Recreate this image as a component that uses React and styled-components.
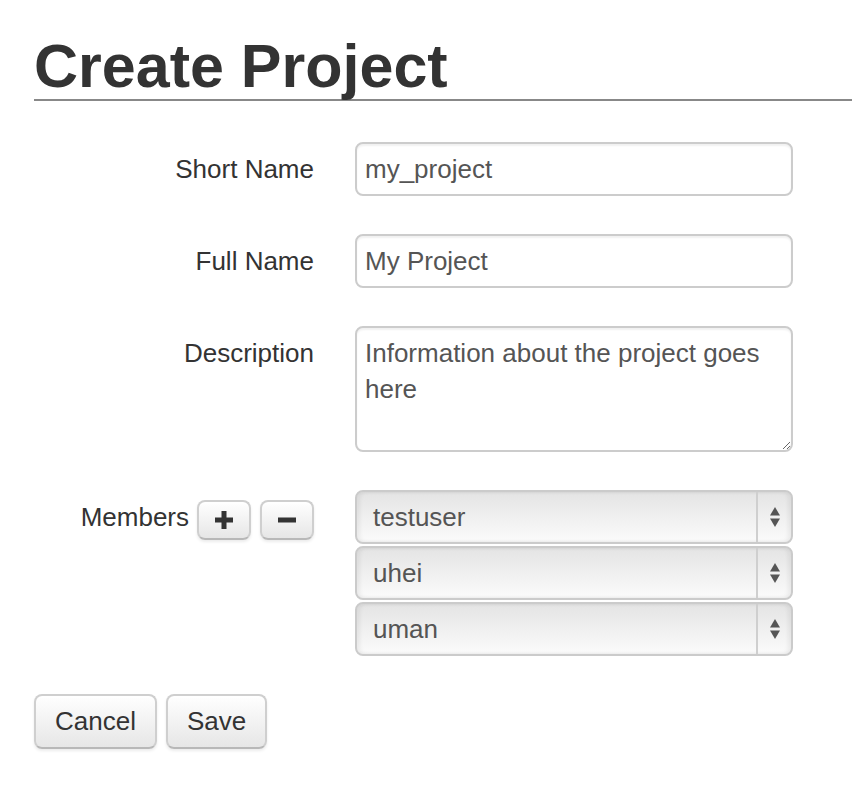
import React from "react";
import styled, { createGlobalStyle } from "styled-components";

const Global = createGlobalStyle`
  html, body { margin: 0; padding: 0; background: #fff; }
  body { font-family: "Liberation Sans", Arial, Helvetica, sans-serif; color: #333; }
  * { box-sizing: border-box; }
`;

const Page = styled.div`
  padding: 33px 0 40px 34px;
  width: 852px;
`;

const Title = styled.h1`
  margin: 0;
  font-size: 61px;
  line-height: 66px;
  font-weight: bold;
  color: #333;
  border-bottom: 2px solid #888;
`;

const Form = styled.form`
  display: grid;
  grid-template-columns: 280px 438px;
  column-gap: 41px;
  row-gap: 38px;
  margin-top: 41px;
`;

const Label = styled.label`
  display: flex;
  justify-content: flex-end;
  align-items: ${(p) => (p.$center ? "center" : "flex-start")};
  height: ${(p) => (p.$center ? "54px" : "auto")};
  font-size: 26px;
  line-height: 54px;
  color: #333;
  white-space: nowrap;
`;

const fieldBase = `
  width: 438px;
  border: 2px solid #ccc;
  border-radius: 8px;
  font-family: "Liberation Sans", Arial, Helvetica, sans-serif;
  font-size: 26px;
  line-height: 36px;
  color: #555;
  padding: 7px 8px;
  background: #fff;
  box-shadow: inset 0 2px 2px rgba(0,0,0,0.06);
  outline: none;
`;

const Input = styled.input`
  ${fieldBase}
  height: 54px;
  display: block;
`;

const TextArea = styled.textarea`
  ${fieldBase}
  height: 126px;
  display: block;
  resize: vertical;
`;

const SmallButtons = styled.span`
  display: inline-flex;
  gap: 9px;
  margin-left: 8px;
  margin-top: 6px;
`;

const Button = styled.button`
  display: inline-flex;
  align-items: center;
  justify-content: center;
  height: ${(p) => (p.$small ? "40px" : "55px")};
  width: ${(p) => (p.$w ? p.$w + "px" : "auto")};
  padding: ${(p) => (p.$small ? "0" : "0 19px")};
  border: 2px solid #cfcfcf;
  border-bottom-color: #b8b8b8;
  border-radius: 8px;
  background: linear-gradient(#ffffff, #e6e6e6);
  box-shadow: inset 0 2px 0 rgba(255,255,255,0.6), 0 2px 3px rgba(0,0,0,0.08);
  font-family: "Liberation Sans", Arial, Helvetica, sans-serif;
  font-size: 26px;
  color: #333;
  cursor: pointer;
`;

const SelectStack = styled.div`
  display: flex;
  flex-direction: column;
  gap: 2px;
`;

const SelectBox = styled.div`
  display: flex;
  width: 438px;
  height: 54px;
  border: 2px solid #cbcbcb;
  border-radius: 8px;
  background: linear-gradient(#e4e4e4, #fbfbfb);
  box-shadow: inset 3px 0 4px rgba(0,0,0,0.06), inset -3px 0 4px rgba(0,0,0,0.06);
  overflow: hidden;
`;

const SelectText = styled.span`
  flex: 1;
  padding-left: 16px;
  font-size: 26px;
  line-height: 50px;
  color: #555;
`;

const ArrowBox = styled.span`
  width: 35px;
  border-left: 2px solid #cfcfcf;
  display: flex;
  align-items: center;
  justify-content: center;
`;

const Actions = styled.div`
  grid-column: 1 / span 2;
  display: flex;
  gap: 9px;
`;

const Arrows = () => (
  <svg width="12" height="26" viewBox="0 0 12 26">
    <path d="M6 3 L11 11.5 L1 11.5 Z" fill="#555" />
    <path d="M1 14.5 L11 14.5 L6 23 Z" fill="#555" />
  </svg>
);

const Plus = () => (
  <svg width="20" height="20" viewBox="0 0 20 20">
    <rect x="7.5" y="1" width="5" height="18" fill="#333" />
    <rect x="1" y="7.5" width="18" height="5" fill="#333" />
  </svg>
);

const Minus = () => (
  <svg width="20" height="20" viewBox="0 0 20 20">
    <rect x="1" y="7.5" width="18" height="5" fill="#333" />
  </svg>
);

const members = ["testuser", "uhei", "uman"];

export default function App() {
  return (
    <>
      <Global />
      <Page>
        <Title>Create Project</Title>
        <Form onSubmit={(e) => e.preventDefault()}>
          <Label $center>Short Name</Label>
          <Input defaultValue="my_project" />

          <Label $center>Full Name</Label>
          <Input defaultValue="My Project" />

          <Label>Description</Label>
          <TextArea defaultValue="Information about the project goes here" />

          <Label $center>
            Members
            <SmallButtons>
              <Button type="button" $small $w={54}><Plus /></Button>
              <Button type="button" $small $w={54}><Minus /></Button>
            </SmallButtons>
          </Label>
          <SelectStack>
            {members.map((m) => (
              <SelectBox key={m}>
                <SelectText>{m}</SelectText>
                <ArrowBox><Arrows /></ArrowBox>
              </SelectBox>
            ))}
          </SelectStack>

          <Actions>
            <Button type="button">Cancel</Button>
            <Button type="submit">Save</Button>
          </Actions>
        </Form>
      </Page>
    </>
  );
}
